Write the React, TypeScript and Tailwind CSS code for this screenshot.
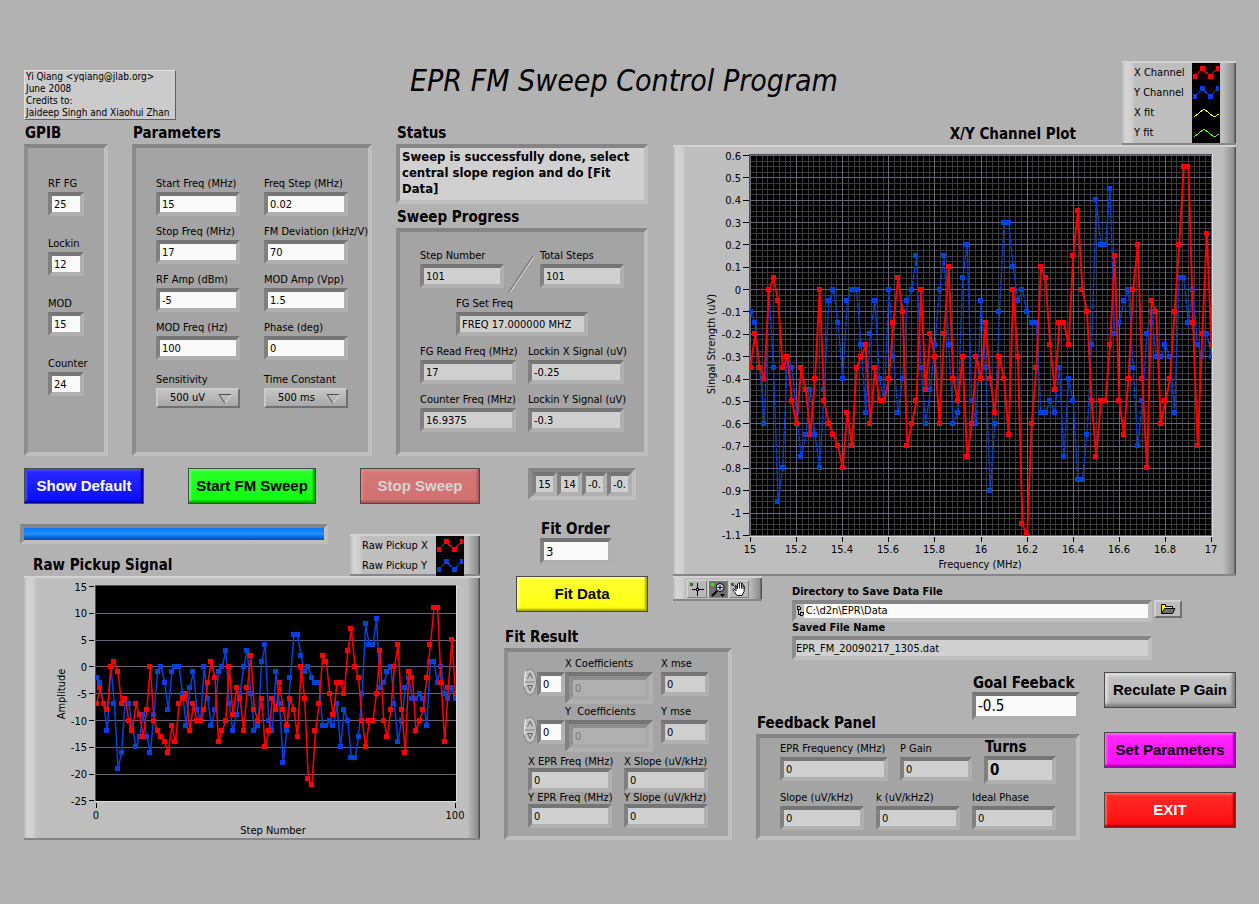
import { useId, type ReactNode } from "react";

// ─── Sweep data (raw pickup units, one value per step) ───────────────────────
const rawX = [
  -7, -4, -7, -8, 0, 1, -1, -7, -6, -10, -12, -7, -9, -13, -8, 0, -10, -12, -13, -14,
  -16, -11, -14, -7, -6, -5, -12, -7, -10, -10, -8, -3, 1, -2, -14, -12, -10, 0, -9, -4,
  -6, -12, -4, 2, -8, -10, -6, -15, -12, -6, -8, -3, -8, -11, -6, -8, -13, 0, -6, -21,
  -22, -12, -7, 2, 1, -5, -9, -3, -3, -5, 3, 7, 0, -2, -10, -15, -10, -10, -5, 3,
  -10, -13, -8, 0, 4, -8, -16, -1, -2, -12, -10, -8, -2, 4, 11, 11, -3, -14, -4, 5, -5,
];

const rawY = [
  -2, -3, -7, -12, 0, -7, -19, -16, -6, -7, -11, -15, -13, -9, -13, -16, -9, -1, 0, -3,
  -8, -1, 0, 0, -5, -11, -4, -1, -8, -10, 0, -6, -11, -8, -1, 0, 3, -7, -12, -9,
  -5, 0, 3, -5, -12, -11, 1, 4, -10, -12, -1, -7, -18, -12, -2, 6, 6, 2, -1, 0,
  -2, -3, -3, -11, -11, -10, -11, -7, -15, -8, -10, -17, -17, -13, -5, 8, 4, 4, 9, -4,
  -3, -1, 0, -7, -14, -10, -4, -2, -6, -6, -5, -6, -11, 1, 1, -3, 0, -5, -6, -4, -6,
];

const RED = "#ff0000";
const BLUE = "#0042dc";

// ─── Shared styles ───────────────────────────────────────────────────────────
const raised =
  "border-t-2 border-b-2 border-t-[#d2d2d2] border-b-[#868686] bg-[linear-gradient(to_right,#b6b6b6_0,#d4d4d4_3px,#d0d0d0_9px,#bebebe_13px,#bebebe_calc(100%-13px),#8c8c8c_calc(100%-2px),#505050_calc(100%-1px))]";
const sunken =
  "border-4 border-t-[#858585] border-l-[#8c8c8c] border-r-[#bebebe] border-b-[#bebebe]";
const well =
  "border-4 border-t-[#757575] border-l-[#808080] border-r-[#b0b0b0] border-b-[#b0b0b0]";

function Heading({ children, className = "" }: { children: ReactNode; className?: string }) {
  return (
    <h2 className={`h-[22px] pl-px text-[15px] leading-[22px] font-bold whitespace-nowrap ${className}`}>
      {children}
    </h2>
  );
}

type FieldProps = {
  label: string;
  value: string;
  width?: string;
  indicator?: boolean;
  tight?: boolean;
};

function Field({ label, value, width = "w-[84px]", indicator, tight }: FieldProps) {
  const id = useId();
  return (
    <div className={width}>
      <label htmlFor={id} className={`block whitespace-nowrap ${tight ? "leading-3" : "leading-4"}`}>
        {label}
      </label>
      <input
        id={id}
        defaultValue={value}
        readOnly={indicator}
        className={`block h-6 w-full px-0.5 leading-4 outline-none ${well} ${
          indicator ? "bg-[#d0d0d0]" : "bg-[#fafafa]"
        }`}
      />
    </div>
  );
}

// Bigger field with a heading-sized label
function LargeField({ label, value, width, height, indicator, text = "text-[13px]" }: {
  label: string;
  value: string;
  width: string;
  height: string;
  indicator?: boolean;
  text?: string;
}) {
  const id = useId();
  return (
    <div className={width}>
      <label htmlFor={id} className="block pl-px text-[15px] leading-[18px] font-bold whitespace-nowrap">
        {label}
      </label>
      <input
        id={id}
        defaultValue={value}
        readOnly={indicator}
        className={`block w-full px-0.5 outline-none ${well} ${height} ${text} ${
          indicator ? "bg-[#d0d0d0]" : "bg-[#fafafa]"
        }`}
      />
    </div>
  );
}

function Ring({ label, value }: { label: string; value: string }) {
  const id = useId();
  return (
    <div className="mt-1 w-[84px]">
      <label htmlFor={id} className="block leading-4 whitespace-nowrap">{label}</label>
      <div className="relative">
        <select
          id={id}
          defaultValue={value}
          className="block h-5 w-full appearance-none border-2 border-t-[#cacaca] border-l-[#cacaca] border-r-[#707070] border-b-[#707070] bg-linear-to-b from-[#c4c4c4] to-[#a8a8a8] pl-3 leading-4 outline-none"
        >
          <option>{value}</option>
        </select>
        <svg className="pointer-events-none absolute top-1.5 right-2" width="14" height="10" viewBox="0 0 14 10">
          <path d="M13 1L7 9.5" stroke="#e0e0e0" fill="none" />
          <path d="M7 9.5L1 .5H13" stroke="#505050" fill="none" />
        </svg>
      </div>
    </div>
  );
}

function PanelButton({ children, className }: { children: ReactNode; className: string }) {
  return (
    <button
      className={`h-9 border border-[#484848] font-['Liberation_Sans',Arial,sans-serif] text-[15px] font-bold whitespace-nowrap ${className}`}
    >
      {children}
    </button>
  );
}

// ─── Charts ──────────────────────────────────────────────────────────────────
type Pt = [number, number];

function Trace({ points, color, width, dashed }: {
  points: Pt[];
  color: string;
  width: number;
  dashed?: boolean;
}) {
  return (
    <g>
      <polyline
        points={points.map((p) => p.join(",")).join(" ")}
        fill="none"
        stroke={color}
        strokeWidth={width}
        strokeDasharray={dashed ? "6 1" : undefined}
      />
      {points.map(([x, y], i) => (
        <rect key={i} x={Math.round(x) - 3} y={Math.round(y) - 3} width="5" height="5" fill={color} shapeRendering="crispEdges" />
      ))}
    </g>
  );
}

function XYChart() {
  const px = (v: number) => 77.5 + (v - 15) * 230.5;
  const py = (v: number) => 8.5 + (0.6 - v) * 223.5;
  const toPts = (raw: number[]): Pt[] => raw.map((v, i) => [px(15 + i * 0.02), py(v / 20)]);
  const yTicks = Array.from({ length: 18 }, (_, i) => (6 - i) / 10);
  const xTicks = Array.from({ length: 11 }, (_, i) => (150 + i * 2) / 10);
  const snap = (n: number) => Math.floor(n) + 0.5;

  return (
    <svg viewBox="0 0 563 427" className="block w-full" role="img" aria-label="X/Y Channel Plot">
      <rect x="76" y="7" width="463" height="382" fill="#000" />
      <g strokeWidth="1" shapeRendering="crispEdges">
        {Array.from({ length: 81 }, (_, i) => (
          <path key={i} d={`M${snap(77.5 + i * 5.7625)} 8V388`} stroke="#3c3c3c" />
        ))}
        {Array.from({ length: 69 }, (_, i) => (
          <path key={i} d={`M77 ${snap(8.5 + i * 5.5875)}H539`} stroke="#3c3c3c" />
        ))}
        {xTicks.map((v) => (
          <path key={v} d={`M${snap(px(v))} 8V388`} stroke="#66667c" />
        ))}
        {yTicks.map((v) => (
          <path key={v} d={`M77 ${snap(py(v))}H539`} stroke="#66667c" />
        ))}
        <path d="M76.5 389V7.5H539" stroke="#505050" fill="none" />
        <path d="M76 389.5H539.5V7" stroke="#dcdcdc" fill="none" />
        {yTicks.map((v) => (
          <path key={v} d={`M70 ${snap(py(v))}H76`} stroke="#000" />
        ))}
        {xTicks.map((v) => (
          <path key={v} d={`M${snap(px(v))} 390V395`} stroke="#000" />
        ))}
      </g>
      <svg x="76" y="7" width="463" height="382" viewBox="76 7 463 382">
        <Trace points={toPts(rawY)} color={BLUE} width={1.4} dashed />
        <Trace points={toPts(rawX)} color={RED} width={1.9} />
      </svg>
      <g fontSize="11" fill="#000">
        {yTicks.map((v) => (
          <text key={v} x="68" y={Math.round(py(v)) + 4} textAnchor="end">{v}</text>
        ))}
        {xTicks.map((v) => (
          <text key={v} x={Math.floor(px(v))} y="406" textAnchor="middle">{v}</text>
        ))}
        <text x="307" y="421" textAnchor="middle">Frequency (MHz)</text>
        <text transform="translate(42 197) rotate(-90)" textAnchor="middle">Singal Strength (uV)</text>
      </g>
    </svg>
  );
}

function RawChart() {
  const py = (v: number) => 8.5 + (15 - v) * 5.36;
  const toPts = (raw: number[]): Pt[] => raw.map((v, i) => [72.5 + i * 3.59, py(v)]);
  const yTicks = [15, 10, 5, 0, -5, -10, -15, -20, -25];
  const snap = (n: number) => Math.floor(n) + 0.5;

  return (
    <svg viewBox="0 0 456 260" className="block w-full" role="img" aria-label="Raw Pickup Signal">
      <rect x="71" y="7" width="361" height="216" fill="#000" />
      <g strokeWidth="1" shapeRendering="crispEdges">
        {yTicks.map((v) => (
          <path key={v} d={`M65 ${snap(py(v))}H70`} stroke="#000" />
        ))}
        {yTicks.slice(1, -1).map((v) => (
          <path key={v} d={`M72 ${snap(py(v))}H432`} stroke="#66667c" />
        ))}
        <path d="M71.5 223V7.5H432" stroke="#505050" fill="none" />
        <path d="M71 223.5H432.5V7" stroke="#dcdcdc" fill="none" />
        <path d="M72.5 225V230M431.5 225V230" stroke="#000" />
      </g>
      <svg x="71" y="7" width="361" height="216" viewBox="71 7 361 216">
        <Trace points={toPts(rawY)} color={BLUE} width={1.5} />
        <Trace points={toPts(rawX)} color={RED} width={1.5} />
      </svg>
      <g fontSize="11" fill="#000">
        {yTicks.map((v) => (
          <text key={v} x="63" y={Math.round(py(v)) + 4} textAnchor="end">{v}</text>
        ))}
        <text x="72" y="241" textAnchor="middle">0</text>
        <text x="431" y="241" textAnchor="middle">100</text>
        <text x="249" y="256" textAnchor="middle">Step Number</text>
        <text transform="translate(41 116) rotate(-90)" textAnchor="middle">Amplitude</text>
      </g>
    </svg>
  );
}

function Legend({ items, className }: {
  items: { name: string; color: string; line?: boolean }[];
  className: string;
}) {
  return (
    <ul className={`pr-4 pl-3 ${raised} ${className}`}>
      {items.map(({ name, color, line }) => (
        <li key={name} className="flex h-5 items-center justify-between leading-4">
          {name}
          <svg width="28" height="20" className="bg-black" shapeRendering="crispEdges">
            {line ? (
              <path d="M2 14L12 6L22 14L27 11" stroke={color} fill="none" />
            ) : (
              <>
                <path d="M3 13L10 6L18 13L25 6" stroke={color} fill="none" />
                <path d="M1 11h4v5H1zM8 3h5v5H8zM16 11h5v5H16zM24 3h3v5H24z" fill={color} />
              </>
            )}
          </svg>
        </li>
      ))}
    </ul>
  );
}

// ─── Fit coefficients row: index spinner, array element, mse ─────────────────
function Coefficients({ label, mse }: { label: string; mse: string }) {
  const id = useId();
  return (
    <div className="flex h-12 pl-[15px]">
      <svg width="14" height="28" viewBox="0 0 14 28" className="mt-3">
        <ellipse cx="7" cy="14" rx="6.5" ry="13" fill="#c2c2c2" stroke="#7c7c7c" />
        <path d="M3 3Q1 8 1.5 18" stroke="#e6e6e6" strokeWidth="1.5" fill="none" />
        <path d="M2 14H12" stroke="#808080" />
        <path d="M4.500 10.500L7 5L9.500 10.500" stroke="#606060" fill="none" />
        <path d="M9.500 17.500L7 22.500L4.500 17.500Z" stroke="#606060" fill="none" />
      </svg>
      <input
        aria-label={`${label} index`}
        defaultValue="0"
        className={`mt-4 h-6 w-7 bg-[#fafafa] px-0.5 outline-none ${well}`}
      />
      <div className="mr-2 w-[88px]">
        <label htmlFor={id} className="block leading-4 whitespace-pre">{label}</label>
        <div className={`h-8 ${well}`}>
          <input
            id={id}
            defaultValue="0"
            readOnly
            className="block h-6 w-full border-4 border-t-[#8c8c8c] border-l-[#929292] border-r-[#aaaaaa] border-b-[#aaaaaa] bg-[#b0b0b0] px-0.5 text-[#777] outline-none"
          />
        </div>
      </div>
      <Field label={mse} value="0" width="w-12" indicator />
    </div>
  );
}

function Toolbar() {
  const btn = "grid h-[18px] w-5 place-items-center border border-t-[#d8d8d8] border-l-[#d8d8d8] border-r-[#808080] border-b-[#808080]";
  return (
    <div className={`flex h-[25px] w-[89px] shrink-0 items-center gap-px pl-3.5 ${raised}`}>
      <button aria-label="Cursor" className={`${btn} bg-[#b8b8b8]`}>
        <svg width="18" height="16" viewBox="0 0 18 16" shapeRendering="crispEdges">
          <path d="M2 2h3v3H2z" fill="#4c6048" />
          <path d="M4 8.500H16M9.500 2V15" stroke="#000" />
          <path d="M8 7h3v3H8z" fill="#000" />
          <path d="M9 8h1v1H9z" fill="#fff" />
        </svg>
      </button>
      <button aria-label="Zoom" className={`${btn} bg-[#707070]`}>
        <svg width="18" height="16" viewBox="0 0 18 16">
          <path d="M2 2h3v3H2z" fill="#40e020" />
          <path d="M8 10L3 15" stroke="#000" strokeWidth="2" />
          <circle cx="11" cy="6.500" r="4" fill="#d8d8f0" stroke="#000" />
          <path d="M8.500 6.500H13.500M11 4V9" stroke="#000" />
          <path d="M11 13h5l-2.500 3z" fill="#000" />
        </svg>
      </button>
      <button aria-label="Pan" className={`${btn} bg-[#b8b8b8]`}>
        <svg width="18" height="16" viewBox="0 0 18 16">
          <path d="M1 2h3v3H1z" fill="#4c6048" />
          <path
            d="M6 10L3.500 7.500Q2.500 8 3 9L7 14.500H12L14 10.500L14.500 5.500Q13.500 4.500 13 5.500V3Q12 2 11.500 3V2Q10.500 .8 9.500 2V3Q8.500 1.800 7.500 3L7.500 8L6 4.500Q5 4 5 5L6.500 9.500M9.500 3V7.500M11.500 3V7.500M13 5V8"
            fill="#fff"
            stroke="#000"
            strokeWidth=".9"
          />
        </svg>
      </button>
    </div>
  );
}

export default function App() {
  const directoryId = useId();
  const fileId = useId();

  return (
    <main className="min-h-screen bg-[#b2b2b2] pt-[61px] pr-[23px] pb-16 pl-5 font-['DejaVu_Sans_Condensed','Noto_Sans',sans-serif] text-[11px] text-black">
      <div className="grid grid-cols-[628px_minmax(0,1fr)_114px] grid-rows-[61px_23px_auto]">

        {/* ── Credits and title ──────────────────────────────────────────── */}
        <header className="col-span-2 flex items-start">
          <p className="mt-[9px] ml-1 h-[50px] w-[152px] border border-t-[#e4e4e4] border-l-[#e4e4e4] border-r-[#606060] border-b-[#606060] bg-[#cbcbcb] pl-px text-[10px] leading-3 whitespace-nowrap">
            Yi Qiang &lt;yqiang@jlab.org&gt;<br />
            June 2008<br />
            Credits to:<br />
            Jaideep Singh and Xiaohui Zhan
          </p>
          <h1 className="ml-[234px] text-3xl leading-10 whitespace-nowrap italic">
            EPR FM Sweep Control Program
          </h1>
        </header>

        <Legend
          className="row-span-2 h-[84px]"
          items={[
            { name: "X Channel", color: RED },
            { name: "Y Channel", color: BLUE },
            { name: "X fit", color: "#ffff00", line: true },
            { name: "Y fit", color: "#60ff00", line: true },
          ]}
        />

        {/* ── Left side ──────────────────────────────────────────────────── */}
        <div className="row-span-2">
          <div className="ml-1 flex gap-6">
            <section className="flex w-[84px] flex-col">
              <Heading>GPIB</Heading>
              <div className={`flex flex-1 flex-col gap-5 bg-[#a4a4a4] pt-7 pl-5 ${sunken}`}>
                <Field label="RF FG" value="25" width="w-9" />
                <Field label="Lockin" value="12" width="w-9" />
                <Field label="MOD" value="15" width="w-9" />
                <Field label="Counter" value="24" width="w-9" />
              </div>
            </section>

            <section className="flex w-60 flex-col">
              <Heading>Parameters</Heading>
              <div className={`grid flex-1 grid-cols-[84px_84px] content-start gap-x-6 gap-y-2 bg-[#a4a4a4] pt-7 pl-5 ${sunken}`}>
                <Field label="Start Freq (MHz)" value="15" />
                <Field label="Freq Step (MHz)" value="0.02" />
                <Field label="Stop Freq (MHz)" value="17" />
                <Field label="FM Deviation (kHz/V)" value="70" />
                <Field label="RF Amp (dBm)" value="-5" />
                <Field label="MOD Amp (Vpp)" value="1.5" />
                <Field label="MOD Freq (Hz)" value="100" />
                <Field label="Phase (deg)" value="0" />
                <Ring label="Sensitivity" value="500 uV" />
                <Ring label="Time Constant" value="500 ms" />
              </div>
            </section>

            <section className="w-[252px]">
              <Heading>Status</Heading>
              <p className={`mb-0.5 h-[60px] bg-[#d0d0d0] pt-px pl-0.5 text-[13px] leading-4 font-bold ${sunken}`}>
                Sweep is successfully done, select central slope region and do [Fit Data]
              </p>
              <Heading>Sweep Progress</Heading>
              <div className={`flex h-[228px] flex-col gap-2 bg-[#a4a4a4] pt-4 pl-5 ${sunken}`}>
                <div className="flex">
                  <Field label="Step Number" value="101" indicator />
                  <svg width="36" height="40" className="overflow-visible">
                    <path d="M5 44L29 8" stroke="#606060" />
                    <path d="M6 44.500L30 8.500" stroke="#dedede" />
                  </svg>
                  <Field label="Total Steps" value="101" indicator />
                </div>
                <div className="ml-9">
                  <Field label="FG Set Freq" value="FREQ 17.000000 MHZ" width="w-[132px]" indicator />
                </div>
                <div className="flex gap-3">
                  <Field label="FG Read Freq (MHz)" value="17" width="w-24" indicator />
                  <Field label="Lockin X Signal (uV)" value="-0.25" width="w-24" indicator />
                </div>
                <div className="flex gap-3">
                  <Field label="Counter Freq (MHz)" value="16.9375" width="w-24" indicator />
                  <Field label="Lockin Y Signal (uV)" value="-0.3" width="w-24" indicator />
                </div>
              </div>
            </section>
          </div>

          {/* Sweep buttons */}
          <div className="mt-3 ml-1 flex h-9 items-start">
            <PanelButton className="w-[120px] bg-linear-to-b from-[#2828ff] to-[#0808ff] text-white shadow-[inset_-2px_-2px_2px_#0000a0,inset_2px_2px_2px_#4848ff]">
              Show Default
            </PanelButton>
            <PanelButton className="ml-11 w-32 bg-linear-to-b from-[#28ff28] to-[#08ff08] shadow-[inset_-2px_-2px_2px_#00a800,inset_2px_2px_2px_#60ff60]">
              Start FM Sweep
            </PanelButton>
            <PanelButton className="ml-11 w-[120px] border-[#8a8a8a] bg-linear-to-b from-[#d67878] to-[#d07070] text-[#d4d4d4] shadow-[inset_-2px_-2px_2px_#a85858,inset_2px_2px_2px_#dc8888]">
              Stop Sweep
            </PanelButton>
            <div className={`ml-12 flex ${sunken}`}>
              {["15", "14", "-0.", "-0."].map((v, i) => (
                <input
                  key={i}
                  aria-label={`Cluster value ${i + 1}`}
                  defaultValue={v}
                  readOnly
                  className={`h-6 w-[25px] bg-[#d0d0d0] text-center outline-none ${well}`}
                />
              ))}
            </div>
          </div>

          <div className="mt-4 flex gap-6">
            {/* Raw pickup chart */}
            <section className="w-[460px] pt-1">
              <div className="flex items-end">
                <div className="flex-1">
                  <div className={`h-5 w-[308px] bg-[#a4a4a4] ${sunken}`} role="progressbar" aria-label="Sweep progress" aria-valuenow={100}>
                    <div className="h-full bg-linear-to-b from-[#0878f8] via-[#2090ff] to-[#0048b0]" />
                  </div>
                  <Heading className="mt-2.5 ml-3">Raw Pickup Signal</Heading>
                </div>
                <Legend
                  className="h-[42px] w-[130px]"
                  items={[
                    { name: "Raw Pickup X", color: RED },
                    { name: "Raw Pickup Y", color: BLUE },
                  ]}
                />
              </div>
              <div className={`ml-1 ${raised}`}>
                <RawChart />
              </div>
            </section>

            {/* Fit controls */}
            <section className="w-36">
              <div className="ml-9">
                <LargeField label="Fit Order" value="3" width="w-[72px]" height="h-[26px]" />
              </div>
              <PanelButton className="mt-3 ml-3 w-[132px] bg-linear-to-b from-[#ffff30] to-[#ffff08] shadow-[inset_-2px_-2px_2px_#a8a800,inset_2px_2px_2px_#ffff80]">
                Fit Data
              </PanelButton>
              <Heading className="mt-3.5">Fit Result</Heading>
              <div className={`h-48 w-[228px] bg-[#a4a4a4] pt-1 ${sunken}`}>
                <Coefficients label="X Coefficients" mse="X mse" />
                <Coefficients label="Y  Coefficients" mse="Y mse" />
                <div className="mt-1 ml-5 grid grid-cols-[84px_84px] gap-x-3">
                  <Field label="X EPR Freq (MHz)" value="0" indicator tight />
                  <Field label="X Slope (uV/kHz)" value="0" indicator tight />
                  <Field label="Y EPR Freq (MHz)" value="0" indicator tight />
                  <Field label="Y Slope (uV/kHz)" value="0" indicator tight />
                </div>
              </div>
            </section>
          </div>
        </div>

        {/* ── Right side ─────────────────────────────────────────────────── */}
        <Heading className="mt-px pr-[46px] text-right">X/Y Channel Plot</Heading>

        <div className="col-span-2 pl-[25px]">
          <div className={raised}>
            <XYChart />
          </div>

          <div className="flex">
            <Toolbar />
            <div className="mr-[54px] ml-[30px] flex-1 pt-2.5">
              <label htmlFor={directoryId} className="mb-0.5 block leading-3 font-bold">
                Directory to Save Data File
              </label>
              <div className="flex gap-0.5">
                <div className={`flex h-[22px] flex-1 bg-[#fafafa] ${sunken}`}>
                  <svg width="8" height="14" viewBox="0 0 8 14" className="bg-[#c0c0c0]" shapeRendering="crispEdges">
                    <path d="M1.500 2.500h3v3h-3zM4.500 8.500h3v3h-3zM2.500 6V10.500H4" stroke="#000" fill="none" />
                  </svg>
                  <input
                    id={directoryId}
                    defaultValue="C:\d2n\EPR\Data"
                    className="w-full px-0.5 outline-none"
                  />
                </div>
                <button
                  aria-label="Browse"
                  className="grid h-[18px] w-7 place-items-center border-2 border-t-[#d0d0d0] border-l-[#d0d0d0] border-r-[#707070] border-b-[#707070] bg-[#bcbcbc]"
                >
                  <svg width="16" height="12" viewBox="0 0 16 12">
                    <path d="M1.500 10.500V1.500H5.500V3.500H12.500V5.500" fill="#ffff00" stroke="#000" />
                    <path d="M1.500 10.500L4.500 5.500H15L12.500 10.500Z" fill="#707070" stroke="#000" />
                  </svg>
                </button>
              </div>
              <label htmlFor={fileId} className="mb-0.5 block leading-3 font-bold">
                Saved File Name
              </label>
              <div className="pr-[30px]">
                <input
                  id={fileId}
                  defaultValue="EPR_FM_20090217_1305.dat"
                  readOnly
                  className={`block h-6 w-full bg-[#d0d0d0] outline-none ${sunken}`}
                />
              </div>
            </div>
          </div>

          <div className="mt-3 flex justify-between gap-6 pl-[83px]">
            <section className="max-w-[324px] flex-1">
              <div className="flex items-end justify-between">
                <Heading>Feedback Panel</Heading>
                <div className="mt-0.5 mb-3.5">
                  <LargeField label="Goal Feeback" value="-0.5" width="w-[108px]" height="h-7" text="text-[15px]" />
                </div>
              </div>
              <div className={`h-[106px] bg-[#a4a4a4] pl-5 ${sunken}`}>
                <div className="flex items-center gap-3">
                  <Field label="EPR Frequency (MHz)" value="0" width="w-[108px]" indicator />
                  <Field label="P Gain" value="0" width="w-[72px]" indicator />
                  <LargeField label="Turns" value="0" width="w-[72px]" height="h-7" indicator text="text-[15px] font-bold" />
                </div>
                <div className="mt-1.5 flex gap-3">
                  <Field label="Slope (uV/kHz)" value="0" indicator />
                  <Field label="k (uV/kHz2)" value="0" indicator />
                  <Field label="Ideal Phase" value="0" indicator />
                </div>
              </div>
            </section>

            <div className="flex w-[132px] flex-col gap-6">
              <PanelButton className="bg-linear-to-b from-[#c4c4c4] to-[#b0b0b0] shadow-[inset_-3px_-3px_3px_#808080,inset_3px_3px_3px_#dcdcdc]">
                Reculate P Gain
              </PanelButton>
              <PanelButton className="bg-linear-to-b from-[#ff28ff] to-[#ff08ff] shadow-[inset_-2px_-2px_2px_#a800a8,inset_2px_2px_2px_#ff60ff]">
                Set Parameters
              </PanelButton>
              <PanelButton className="bg-linear-to-b from-[#ff2828] to-[#ff0808] text-white shadow-[inset_-2px_-2px_2px_#a80000,inset_2px_2px_2px_#ff6060]">
                EXIT
              </PanelButton>
            </div>
          </div>
        </div>
      </div>
    </main>
  );
}
